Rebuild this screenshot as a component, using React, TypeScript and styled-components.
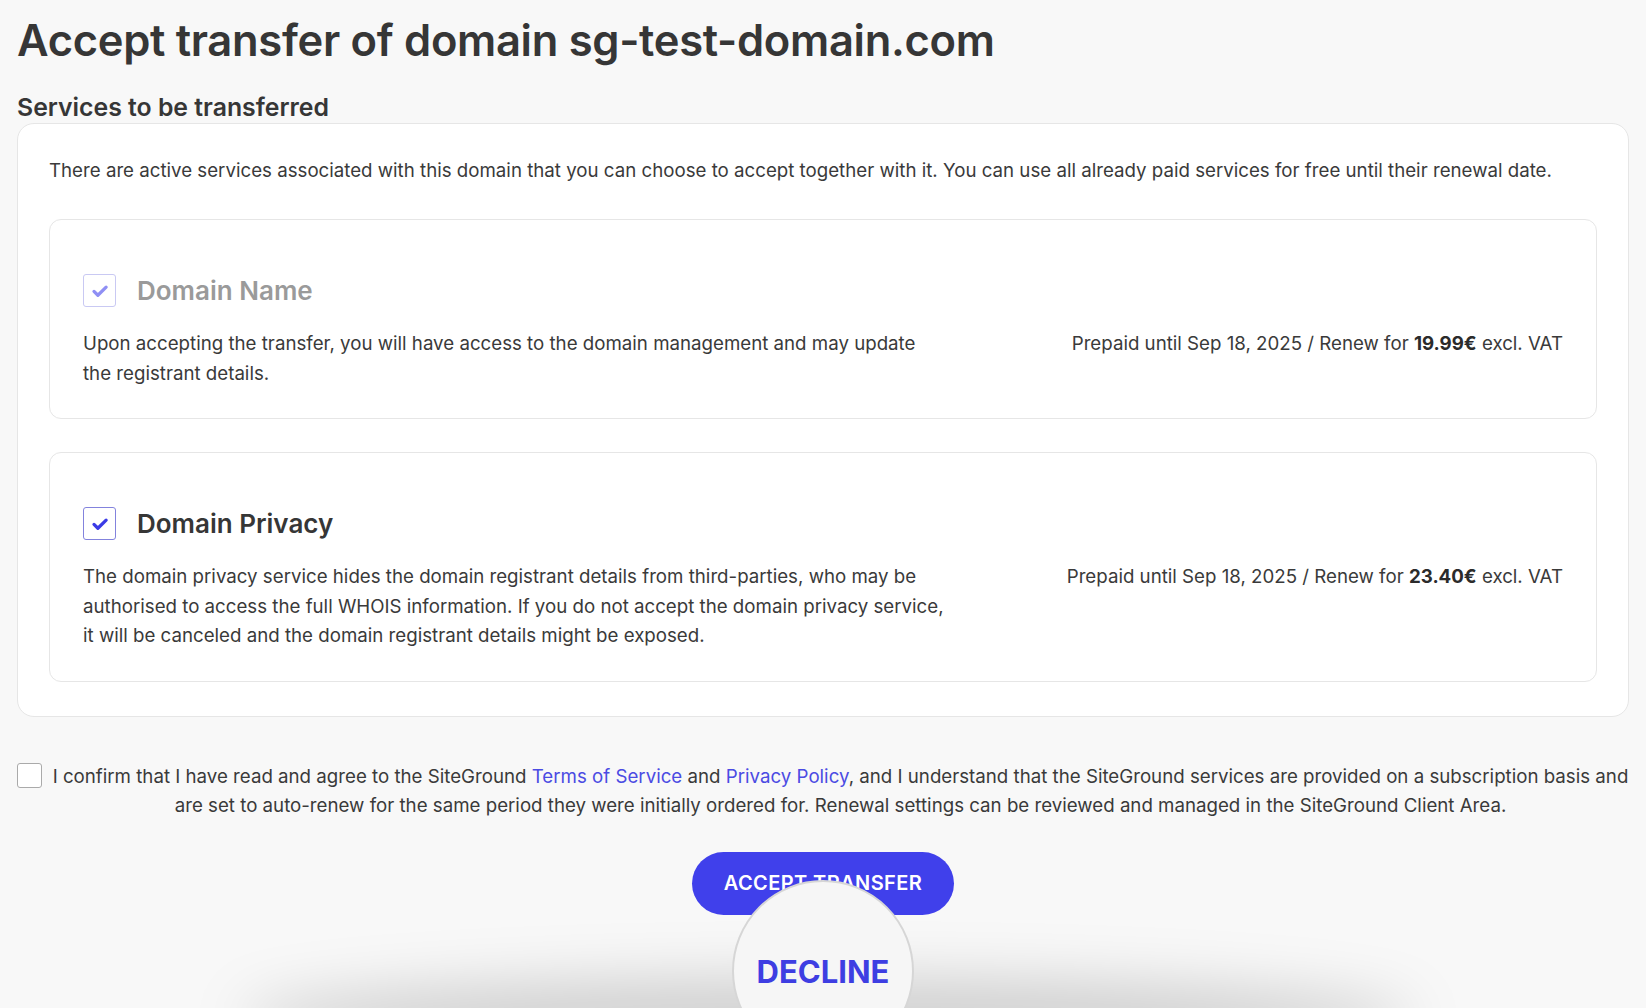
import React from "react";
import styled, { createGlobalStyle } from "styled-components";

const GlobalStyle = createGlobalStyle`
  html, body {
    margin: 0;
    padding: 0;
    background: #f8f8f8;
  }
  * {
    box-sizing: border-box;
  }
`;

type Service = {
  name: string;
  description: string;
  price: string;
  disabled?: boolean;
};

const services: Service[] = [
  {
    name: "Domain Name",
    description:
      "Upon accepting the transfer, you will have access to the domain management and may update the registrant details.",
    price: "19.99€",
    disabled: true,
  },
  {
    name: "Domain Privacy",
    description:
      "The domain privacy service hides the domain registrant details from third-parties, who may be authorised to access the full WHOIS information. If you do not accept the domain privacy service, it will be canceled and the domain registrant details might be exposed.",
    price: "23.40€",
  },
];

const CheckMark = ({ color }: { color: string }) => (
  <svg width="20" height="20" viewBox="0 0 16 16" fill="none">
    <path
      d="M3.2 8.3l3.1 3.1L12.9 4.9"
      stroke={color}
      strokeWidth="2.6"
      strokeLinecap="round"
      strokeLinejoin="round"
    />
  </svg>
);

const App: React.FC = () => {
  return (
    <Page>
      <GlobalStyle />
      <Title>Accept transfer of domain sg-test-domain.com</Title>
      <SectionTitle>Services to be transferred</SectionTitle>
      <Card>
        <Intro>
          There are active services associated with this domain that you can
          choose to accept together with it. You can use all already paid
          services for free until their renewal date.
        </Intro>
        {services.map(service => (
          <ServiceCard key={service.name}>
            <ServiceHeader>
              <CheckBox $disabled={service.disabled}>
                <CheckMark color={service.disabled ? "#8f8ff4" : "#3b3be6"} />
              </CheckBox>
              <ServiceName $disabled={service.disabled}>{service.name}</ServiceName>
            </ServiceHeader>
            <ServiceBody>
              <Description>{service.description}</Description>
              <Price>
                Prepaid until Sep 18, 2025 / Renew for <b>{service.price}</b> excl. VAT
              </Price>
            </ServiceBody>
          </ServiceCard>
        ))}
      </Card>

      <Confirm>
        <EmptyBox />
        <ConfirmText>
          I confirm that I have read and agree to the SiteGround{" "}
          <Link href="#">Terms of Service</Link> and <Link href="#">Privacy Policy</Link>, and I
          understand that the SiteGround services are provided on a subscription basis and are set
          to auto-renew for the same period they were initially ordered for. Renewal settings can be
          reviewed and managed in the SiteGround Client Area.
        </ConfirmText>
      </Confirm>

      <Actions>
        <AcceptButton>Accept transfer</AcceptButton>
      </Actions>

      {/* lens over the decline link */}
      <BottomShade />
      <Magnifier>
        <DeclineLabel>Decline</DeclineLabel>
      </Magnifier>
    </Page>
  );
};

const headingFont = `"Inter", "Noto Sans", sans-serif`;
const bodyFont = `"Inter", "Liberation Sans", sans-serif`;

const Page = styled.div`
  position: relative;
  height: 1008px;
  overflow: hidden;
  padding: 13px 17px 0;
  font-family: ${bodyFont};
  color: #363636;
`;

const Title = styled.h1`
  margin: 0;
  font-family: ${headingFont};
  font-size: 43.5px;
  line-height: 54px;
  font-weight: 600;
  letter-spacing: -0.3px;
  color: #363636;
`;

const SectionTitle = styled.h2`
  margin: 25px 0 0;
  font-family: ${headingFont};
  font-size: 24.8px;
  line-height: 30px;
  font-weight: 600;
  color: #363636;
`;

const Card = styled.section`
  margin-top: 1px;
  background: #fff;
  border: 1px solid #e6e6e6;
  border-radius: 17px;
  padding: 32px 31px 34px;
  display: flex;
  flex-direction: column;
  gap: 33px;
`;

const Intro = styled.p`
  margin: 0;
  font-size: 18.7px;
  line-height: 30px;
  color: #3a3a3a;
`;

const ServiceCard = styled.div`
  border: 1px solid #e6e6e6;
  border-radius: 12px;
  padding: 54px 33px 30px;
`;

const ServiceHeader = styled.div`
  display: flex;
  align-items: center;
  gap: 21px;
`;

const CheckBox = styled.span<{ $disabled?: boolean }>`
  width: 33px;
  height: 33px;
  border-radius: 3px;
  border: 1.5px solid ${({ $disabled }) => ($disabled ? "#c9c9f3" : "#8383dd")};
  display: flex;
  align-items: center;
  justify-content: center;
  background: #fff;
`;

const ServiceName = styled.h3<{ $disabled?: boolean }>`
  margin: 0;
  font-family: ${headingFont};
  font-size: 26px;
  font-weight: 600;
  color: ${({ $disabled }) => ($disabled ? "#9a9a9a" : "#363636")};
`;

const ServiceBody = styled.div`
  display: flex;
  justify-content: space-between;
  gap: 40px;
  margin-top: 22px;
`;

const Description = styled.p`
  margin: 0;
  max-width: 862px;
  font-size: 18.7px;
  line-height: 29.5px;
  color: #3a3a3a;
`;

const Price = styled.p`
  margin: 0;
  white-space: nowrap;
  font-size: 18.7px;
  line-height: 29.5px;
  color: #3a3a3a;
  b {
    font-weight: 700;
    color: #2b2b2b;
  }
`;

const Confirm = styled.div`
  display: flex;
  align-items: flex-start;
  gap: 10px;
  margin-top: 45px;
`;

const EmptyBox = styled.span`
  flex: none;
  width: 25px;
  height: 25px;
  margin-top: 1px;
  border: 1.5px solid #aaa;
  border-radius: 3px;
  background: #fff;
`;

const ConfirmText = styled.p`
  margin: 0;
  flex: 1;
  text-align: center;
  font-size: 18.7px;
  line-height: 29.5px;
  color: #3a3a3a;
`;

const Link = styled.a`
  color: #4b4be3;
  text-decoration: none;
`;

const Actions = styled.div`
  display: flex;
  justify-content: center;
  margin-top: 31px;
`;

const AcceptButton = styled.button`
  height: 63px;
  padding: 0 32px;
  border: none;
  border-radius: 32px;
  background: #4040eb;
  color: #fff;
  font-family: ${headingFont};
  font-size: 20px;
  font-weight: 600;
  letter-spacing: 0.4px;
  text-transform: uppercase;
`;

const BottomShade = styled.div`
  position: absolute;
  left: 240px;
  right: 230px;
  bottom: -50px;
  height: 80px;
  border-radius: 50%;
  background: rgba(0, 0, 0, 0.16);
  filter: blur(28px);
`;

const Magnifier = styled.div`
  position: absolute;
  left: 50%;
  top: 880px;
  width: 182px;
  height: 182px;
  margin-left: -91px;
  border-radius: 50%;
  background: #f6f6f6;
  border: 2.5px solid #d6d6d6;
  display: flex;
  justify-content: center;
  padding-top: 70px;
`;

const DeclineLabel = styled.span`
  font-family: ${headingFont};
  font-size: 31px;
  line-height: 40px;
  font-weight: 700;
  text-transform: uppercase;
  color: #3e3ee2;
`;

export default App;
